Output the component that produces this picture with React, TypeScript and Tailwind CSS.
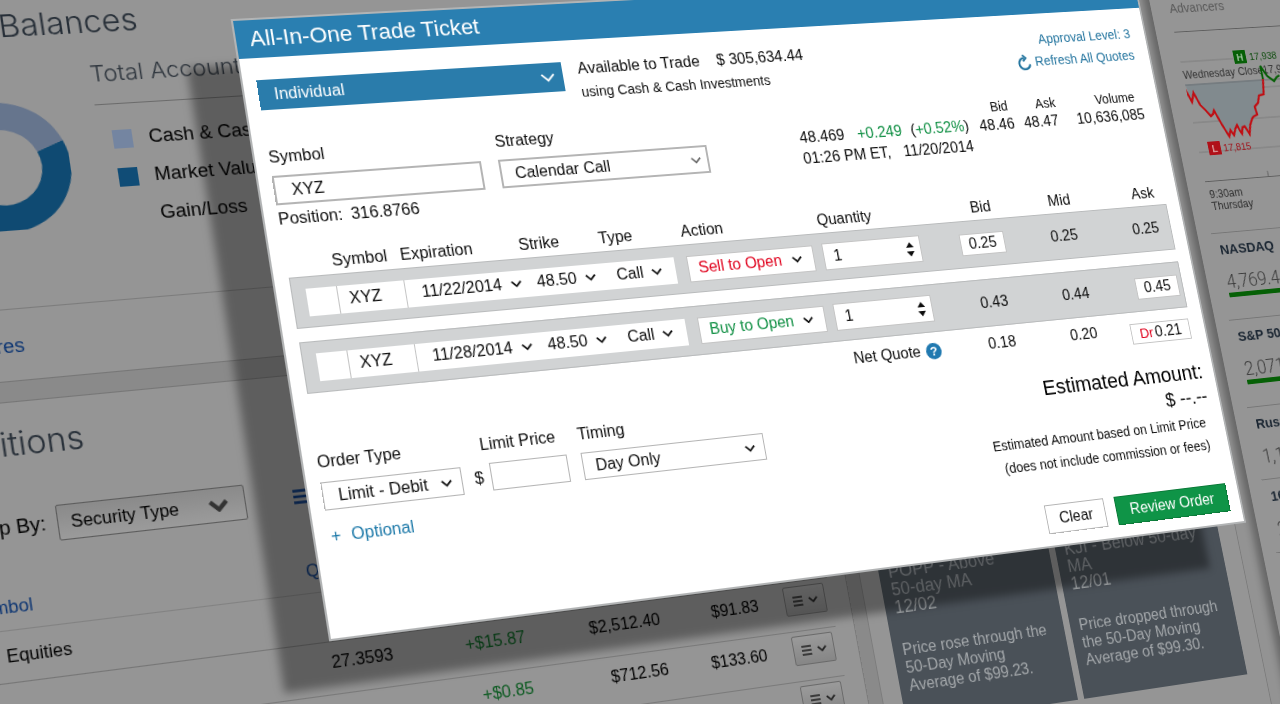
import React from 'react';

type Point = [number, number];

/** CSS matrix3d that maps a w × h rectangle onto four screen corners (TL, TR, BR, BL). */
function quadTransform(w: number, h: number, corners: Point[]): string {
  const [[x0, y0], [x1, y1], [x2, y2], [x3, y3]] = corners;
  const dx1 = x1 - x2;
  const dx2 = x3 - x2;
  const sx = x0 - x1 + x2 - x3;
  const dy1 = y1 - y2;
  const dy2 = y3 - y2;
  const sy = y0 - y1 + y2 - y3;
  const den = dx1 * dy2 - dx2 * dy1;
  const g = (sx * dy2 - dx2 * sy) / den;
  const k = (dx1 * sy - sx * dy1) / den;
  const m = [
    (x1 - x0 + g * x1) / w, (y1 - y0 + g * y1) / w, 0, g / w,
    (x3 - x0 + k * x3) / h, (y3 - y0 + k * y3) / h, 0, k / h,
    0, 0, 1, 0,
    x0, y0, 0, 1,
  ];
  return `matrix3d(${m.join(',')})`;
}

const DIALOG_CORNERS: Point[] = [[233, 21], [1132, -26], [1244, 521], [331, 639]];

function Chevron({ className, width = 2 }: { className: string; width?: number }) {
  return (
    <svg viewBox="0 0 12 8" fill="none" stroke="currentColor" strokeWidth={width} className={className} aria-hidden="true">
      <path d="M1 1.5 6 6.5 11 1.5" />
    </svg>
  );
}

function Select({ label, id, value, className, chevron, stroke = 2 }: {
  label?: string; id?: string; value: string; className: string; chevron: string; stroke?: number;
}) {
  return (
    <span className="relative flex items-center">
      <select id={id} aria-label={label} defaultValue={value} className={`w-full appearance-none py-0 outline-none ${className}`}>
        <option>{value}</option>
      </select>
      <Chevron width={stroke} className={`pointer-events-none absolute ${chevron}`} />
    </span>
  );
}

/* ---------- page behind the dialog ---------- */

function Donut() {
  return (
    <svg viewBox="-62 -62 124 124" className="mt-[54px] ml-[26px] size-[124px] shrink-0" fill="none" strokeWidth="26" aria-hidden="true">
      <path d="M46.3 -16A49 49 0 1 1 -46 16.8" stroke="#0f4a72" />
      <path d="M46.3 -16A49 49 0 0 0 -46 16.8" stroke="#66758d" />
    </svg>
  );
}

function LegendRow({ swatch, text }: { swatch: string; text: string }) {
  return (
    <li className="flex h-[37px] items-center gap-[15px] pl-3 text-[18px] text-black">
      <span className={`size-[18px] shrink-0 ${swatch}`} />
      {text}
    </li>
  );
}

function Balances() {
  return (
    <section className="border-b border-[#767676] bg-[#959595] pt-[35px]">
      <h2 className="pl-26 font-['Inter',sans-serif] text-[30px] leading-9 font-light text-[#272f38]">Balances</h2>
      <div className="flex gap-[30px]">
        <Donut />
        <div className="mt-[19px] flex-1">
          <h3 className="border-b border-[#6b6b6b] pb-4 font-['Inter',sans-serif] text-[22px] leading-7 font-light text-[#30373f]">Total Account</h3>
          <ul className="mt-[15px]">
            <LegendRow swatch="bg-[#7485a1]" text="Cash & Cash" />
            <LegendRow swatch="bg-[#104c76]" text="Market Value" />
            <LegendRow swatch="" text="Gain/Loss" />
          </ul>
        </div>
      </div>
      <div className="mt-[61px] border-t border-[#7c7c7c] pt-5 pb-[18px] pl-[61px]">
        <a href="#more" className="text-[18px] leading-7 text-[#0b3472]">res</a>
      </div>
    </section>
  );
}

function RowMenu({ label }: { label: string }) {
  return (
    <button aria-label={label} className="ml-[27px] flex h-[29px] w-[43px] items-center justify-center gap-1.5 rounded-[2px] border border-[#6a6a6a] bg-gradient-to-b from-[#9a9a9a] to-[#868686] text-[#1f1f1f]">
      <svg viewBox="0 0 10 12" className="h-3 w-2.5" stroke="currentColor" strokeWidth="1.6" aria-hidden="true">
        <path d="M0 2h10M0 6h10M0 10h10" />
      </svg>
      <Chevron className="h-2 w-2.5" />
    </button>
  );
}

const HOLDINGS = [
  { qty: '27.3593', change: '+$15.87', value: '$2,512.40', price: '$91.83' },
  { qty: '', change: '+$0.85', value: '$712.56', price: '$133.60' },
  { qty: '', change: '', value: '', price: '' },
];

function Positions() {
  return (
    <section className="mt-[18px] h-[520px] border-t border-[#767676] bg-[#959595] pt-5">
      <h2 className="pl-[52px] font-['Inter',sans-serif] text-[30px] leading-9 font-light text-[#272f38]">itions</h2>
      <div className="mt-[42px] flex items-center pl-[41px]">
        <label htmlFor="group" className="mr-2.5 text-[18px] text-black">p By:</label>
        <div className="w-[170px]">
          <Select id="group" value="Security Type" stroke={2.6} chevron="right-3.5 h-3 w-[22px] text-[#333]"
            className="h-[33px] rounded-[2px] border border-[#5c5c5c] bg-gradient-to-b from-[#8a8a8a] to-[#9b9b9b] pl-[11px] text-black" />
        </div>
        <svg viewBox="0 0 18 14" className="ml-[44px] h-3.5 w-[18px]" stroke="#0b3472" strokeWidth="2.6" aria-hidden="true">
          <path d="M0 1.5h18M0 7h18M0 12.5h18" />
        </svg>
      </div>
      <table className="w-[812px] table-fixed border-collapse text-right text-black">
        <colgroup>
          <col className="w-[287px]" /><col className="w-[88px]" /><col className="w-[127px]" />
          <col className="w-[134px]" /><col className="w-[101px]" /><col className="w-[75px]" />
        </colgroup>
        <thead>
          <tr className="h-[75px] border-b border-[#828282] align-bottom text-[#0b3472]">
            <th className="pb-2 pl-[26px] text-left font-normal">mbol</th>
            <th className="pb-2 pl-5 text-left font-normal">Qty</th>
            <th colSpan={4} />
          </tr>
        </thead>
        <tbody>
          <tr className="h-[47px] border-b border-[#767676]">
            <td className="pl-8 text-left">Equities</td>
            <td colSpan={5} />
          </tr>
          {HOLDINGS.map((h, i) => (
            <tr key={i} className="h-[49px] border-b border-[#7a7a7a] *:pb-2.5">
              <td />
              <td>{h.qty}</td>
              <td className="text-[#0b5a20]">{h.change}</td>
              <td>{h.value}</td>
              <td>{h.price}</td>
              <td><RowMenu label="Row menu" /></td>
            </tr>
          ))}
        </tbody>
      </table>
    </section>
  );
}

function AlertCard({ title, date, body }: { title: string; date: string; body: string }) {
  return (
    <article className="flex-1 bg-[#4a5158] px-2.5 pt-[18px] pb-[29px]">
      <h3 className="text-[18px] leading-[18px] text-[#92979b]">{title} <span className="whitespace-nowrap">50-day</span> MA</h3>
      <p className="text-[18px] leading-[18px] text-[#a3a7aa]">{date}</p>
      <p className="mt-[25px] leading-[18px] text-[#a3a7aa]">{body}</p>
    </article>
  );
}

function AlertsColumn() {
  return (
    <section className="border-x border-[#7c7c7c] bg-[#959595] px-5 pt-[638px]">
      <div className="flex gap-[7px]">
        <AlertCard title="POPP - Above" date="12/02" body="Price rose through the 50-Day Moving Average of $99.23." />
        <AlertCard title="KJI - Below" date="12/01" body="Price dropped through the 50-Day Moving Average of $99.30." />
      </div>
    </section>
  );
}

function IndexChart() {
  return (
    <svg viewBox="0 0 184 167" className="ml-1.5 h-[167px] w-[184px]" fill="none" fontFamily="'Liberation Sans', Arial, sans-serif" role="img" aria-label="Index chart">
      <path d="M0 33H66M0 67H184M0 101H184M0 134H184" stroke="#7d7d7d" />
      <path d="M0 58 4 78 8 68 13 82 23 95 28 89 34 105 40 119 45 113 52 108 56 117 61 109 65 118 72 101 79 97 79 88 86 76 92 75 95 58Z" fill="#818a8e" />
      <path d="M0 59H184" stroke="#6b6f72" />
      <text x="0" y="52" fontSize="12" fill="#333">Wednesday Close</text>
      <text x="97" y="52" fontSize="12" fill="#333">17,9</text>
      <rect x="65" y="24" width="15" height="15" fill="#075f07" />
      <text x="72.5" y="36" fontSize="11" fontWeight="700" textAnchor="middle" fill="#9fc29f">H</text>
      <text x="84" y="36" fontSize="11" fill="#0a4a0a">17,938</text>
      <rect x="12" y="123" width="15" height="15" fill="#b01018" />
      <text x="19.5" y="135" fontSize="11" fontWeight="700" textAnchor="middle" fill="#dca0a0">L</text>
      <text x="30" y="135" fontSize="11" fill="#a01018">17,815</text>
      <path d="M-2 61 4 78 8 68 13 82 18 88 23 95 26 93 28 89 34 105 40 119 43 112 46 118 49 111 52 107 54 113 56 117 58 110 61 109 65 118 68 108 72 101 74 99 79 97 78 88 83 84 86 76 92 75 95 58" stroke="#c00d12" strokeWidth="2.4" />
      <path d="M95 58 95 43 101 55 108 61 112 57 116 55" stroke="#075f07" strokeWidth="2.4" />
      <path d="M0 166.5H184M77 160V167" stroke="#5e5e5e" />
    </svg>
  );
}

function IndexRow({ name, value, bar }: { name: string; value: string; bar?: boolean }) {
  return (
    <div className="border-t border-[#767676] pt-2 pb-3 pl-[7px]">
      <div className="text-[15px] leading-5 font-bold text-[#1b2632]">{name}</div>
      <div className="mt-[13px] font-['Roboto',sans-serif] text-[20px] leading-6 font-light text-[#3c3c3c]">{value}</div>
      {bar && <div className="mb-3 h-[5px] bg-[#066006]" />}
    </div>
  );
}

function MarketSidebar() {
  return (
    <aside className="relative flex-1 bg-[#959595] pt-[91px] pl-4 shadow-[-5px_0_8px_2px_rgba(0,0,0,0.3)]">
      <div className="ml-1.5 border-b border-[#5e5e5e] pb-4 text-[14px] leading-5 text-[#585858]">Advancers</div>
      <IndexChart />
      <div className="pt-2 pb-[22px] pl-2 text-[12px] leading-[13px] text-[#2e2e2e]">
        <div>9:30am</div>
        <div>Thursday</div>
      </div>
      <IndexRow name="NASDAQ" value="4,769.44" bar />
      <IndexRow name="S&P 500" value="2,071" bar />
      <IndexRow name="Russ" value="1,17" />
      <IndexRow name="10" value="2" />
      <div className="border-t border-[#767676]" />
    </aside>
  );
}

/* ---------- trade ticket dialog ---------- */

function AccountBar() {
  return (
    <div className="flex pt-4">
      <div className="mt-1.5 w-[301px]">
        <Select label="Account" value="Individual" stroke={1.6} chevron="right-2 h-2.5 w-[15px] text-white" className="h-[30px] bg-[#2a7cab] pl-[15px] text-white" />
      </div>
      <div className="mt-0.5 ml-4 leading-6">
        <p className="flex gap-[18px]"><span>Available to Trade</span><span>$ 305,634.44</span></p>
        <p className="text-[14px]">using Cash &amp; Cash Investments</p>
      </div>
      <div className="ml-auto flex flex-col items-end pr-1 text-[14px] leading-6 text-[#24759f]">
        <span>Approval Level: 3</span>
        <button className="flex items-center gap-1">
          <svg viewBox="0 0 16 16" className="size-[17px]" fill="none" stroke="currentColor" strokeWidth="2.2" aria-hidden="true">
            <path d="M8.6 3.4A5.8 5.8 0 1 0 14.2 10.2" />
            <path d="M7.2 .2 10.6 3.5 7.2 6.8" strokeWidth="1.8" />
          </svg>
          Refresh All Quotes
        </button>
      </div>
    </div>
  );
}

function QuoteColumn({ label, value, pad = '' }: { label: string; value: string; pad?: string }) {
  return (
    <div className="text-right leading-5">
      <dt className={`text-[14px] leading-5 ${pad}`}>{label}</dt>
      <dd>{value}</dd>
    </div>
  );
}

function SymbolBar() {
  return (
    <div className="mt-[22px] flex">
      <div className="mt-px w-[204px]">
        <label htmlFor="symbol" className="block leading-5">Symbol</label>
        <input id="symbol" defaultValue="XYZ" className="mt-2 block h-[29px] w-full border-2 border-[#b4b4b4] pl-[15px] outline-none" />
        <p className="mt-1 flex gap-2 leading-5"><span>Position:</span><span>316.8766</span></p>
      </div>
      <div className="mt-px ml-[17px] w-[215px]">
        <label htmlFor="strategy" className="mb-2 block leading-5">Strategy</label>
        <Select id="strategy" value="Calendar Call" stroke={1.8} chevron="right-2 h-2 w-[11px] text-[#666]" className="h-[29px] border-2 border-[#b4b4b4] bg-white pl-[13px]" />
      </div>
      <div className="mt-[18px] ml-[100px] leading-[22px]">
        <p className="flex">
          <span>48.469</span>
          <span className="ml-3.5 text-[#0f8f43]">+0.249</span>
          <span className="ml-2.5">(<span className="text-[#0f8f43]">+0.52%</span>)</span>
        </p>
        <p className="flex gap-3.5"><span>01:26 PM ET,</span><span>11/20/2014</span></p>
      </div>
      <dl className="ml-auto flex pr-1.5">
        <QuoteColumn label="Bid" value="48.46" pad="pr-1" />
        <div className="w-[11px]" />
        <QuoteColumn label="Ask" value="48.47" />
        <div className="w-[21px]" />
        <QuoteColumn label="Volume" value="10,636,085" pad="pr-2" />
      </dl>
    </div>
  );
}

function Price({ value, boxed }: { value: string; boxed?: boolean }) {
  return (
    <span className={`inline-flex h-[23px] w-[50px] items-center justify-center ${boxed ? 'border border-[#c4c4c4] bg-white' : ''}`}>{value}</span>
  );
}

interface Leg { symbol: string; expiration: string; action: string; tone: string; bid: string; mid: string; ask: string; boxed: 'bid' | 'ask' }

const LEGS: Leg[] = [
  { symbol: 'XYZ', expiration: '11/22/2014', action: 'Sell to Open', tone: 'text-[#e0001c]', bid: '0.25', mid: '0.25', ask: '0.25', boxed: 'bid' },
  { symbol: 'XYZ', expiration: '11/28/2014', action: 'Buy to Open', tone: 'text-[#0f8f43]', bid: '0.43', mid: '0.44', ask: '0.45', boxed: 'ask' },
];

function LegRow({ leg, n }: { leg: Leg; n: number }) {
  return (
    <tr className="h-[50px] bg-[#d1d3d4] *:border-y *:border-[#b9bbbc]">
      <td className="border-l pl-[13px]">
        <label className="block h-[27px] bg-white">
          <input type="checkbox" aria-label={`Select leg ${n}`} className="block size-full appearance-none" />
        </label>
      </td>
      <td>
        <input aria-label={`Leg ${n} symbol`} defaultValue={leg.symbol} className="block h-[27px] w-full border-x border-[#c4c4c4] bg-white pl-2.5 outline-none" />
      </td>
      <td><Select label={`Leg ${n} expiration`} value={leg.expiration} chevron="right-[3px] h-2 w-[11px]" className="h-[27px] bg-white pl-[15px]" /></td>
      <td><Select label={`Leg ${n} strike`} value="48.50" chevron="right-[9px] h-2 w-[11px]" className="h-[27px] bg-white pl-3" /></td>
      <td><Select label={`Leg ${n} type`} value="Call" chevron="right-[14px] h-2 w-[11px]" className="h-[27px] bg-white pl-3" /></td>
      <td className="pl-[13px]"><Select label={`Leg ${n} action`} value={leg.action} chevron="right-[13px] h-2 w-[11px]" className={`h-[27px] border border-[#c4c4c4] bg-white pl-2.5 ${leg.tone}`} /></td>
      <td className="pr-6 pl-2.5">
        <span className="relative flex items-center">
          <input type="number" aria-label={`Leg ${n} quantity`} defaultValue={1} className="block h-[28px] w-full border border-[#c4c4c4] bg-white pl-2.5 outline-none [appearance:textfield] [&::-webkit-inner-spin-button]:appearance-none" />
          <svg viewBox="0 0 10 18" className="pointer-events-none absolute right-[7px] h-[18px] w-2.5" fill="currentColor" aria-hidden="true">
            <path d="M5 1.5 9.2 7H.8ZM5 16.5 .8 11h8.4Z" />
          </svg>
        </span>
      </td>
      <td className="text-center"><Price value={leg.bid} boxed={leg.boxed === 'bid'} /></td>
      <td className="text-center"><Price value={leg.mid} /></td>
      <td className="border-r pr-1 text-right"><Price value={leg.ask} boxed={leg.boxed === 'ask'} /></td>
    </tr>
  );
}

function LegsTable() {
  return (
    <table className="mx-px mt-6 w-[931px] table-fixed border-separate border-spacing-0 text-left">
      <colgroup>
        <col className="w-[43px]" /><col className="w-[66px]" /><col className="w-[117px]" /><col className="w-[81px]" /><col className="w-[73px]" />
        <col className="w-[147px]" /><col className="w-[141px]" /><col className="w-[90px]" /><col className="w-[96px]" /><col className="w-[77px]" />
      </colgroup>
      <thead>
        <tr className="leading-5 *:pb-[3px] *:font-normal">
          <td />
          <th>Symbol</th>
          <th>Expiration</th>
          <th>Strike</th>
          <th>Type</th>
          <th className="pl-3">Action</th>
          <th className="pl-2.5">Quantity</th>
          <th className="pl-2.5 text-center">Bid</th>
          <th className="pl-1 text-center">Mid</th>
          <th className="pr-3 text-right">Ask</th>
        </tr>
      </thead>
      <tbody>
        <LegRow leg={LEGS[0]} n={1} />
        <tr className="h-[13px]"><td colSpan={10} /></tr>
        <LegRow leg={LEGS[1]} n={2} />
      </tbody>
      <tfoot>
        <tr className="align-top leading-5">
          <td colSpan={7} className="pt-[9px] pr-[23px]">
            <span className="flex items-center justify-end gap-1.5">
              Net Quote
              <button aria-label="About net quote" className="flex size-[17px] items-center justify-center rounded-full bg-[#2079b0] text-[13px] leading-none font-bold text-white">?</button>
            </span>
          </td>
          <td className="pt-2 text-center">0.18</td>
          <td className="pt-2 text-center">0.20</td>
          <td className="pt-3 pr-0.5">
            <span className="ml-auto flex h-[22px] w-[69px] items-center justify-center gap-0.5 border border-[#c4c4c4] bg-white">
              <span className="text-[15px] text-[#e0001c]">Dr</span>0.21
            </span>
          </td>
        </tr>
      </tfoot>
    </table>
  );
}

function OrderForm() {
  return (
    <div>
      <div className="flex leading-5">
        <div className="w-[134px]">
          <label htmlFor="order-type" className="mb-[9px] block">Order Type</label>
          <Select id="order-type" value="Limit - Debit" chevron="right-2.5 h-2 w-[11px]" className="h-[27px] border border-[#b4b4b4] bg-white pl-[14px]" />
        </div>
        <div className="ml-3">
          <label htmlFor="limit-price" className="mb-2 block pl-2.5">Limit Price</label>
          <div className="flex items-center gap-[7px]">
            $
            <input id="limit-price" className="block h-[27px] w-[77px] border border-[#b4b4b4] outline-none" />
          </div>
        </div>
        <div className="ml-3.5 w-[187px]">
          <label htmlFor="timing" className="mb-2 block">Timing</label>
          <Select id="timing" value="Day Only" chevron="right-2.5 h-2 w-[11px]" className="h-[27px] border border-[#b4b4b4] bg-white pl-3" />
        </div>
      </div>
      <button className="mt-[15px] flex gap-2.5 pl-0.5 leading-5 text-[#1b78a8]"><span>+</span><span>Optional</span></button>
    </div>
  );
}

function TradeTicket() {
  return (
    <div role="dialog" aria-labelledby="ticket-title" className="absolute top-15 left-80 w-[960px] bg-white pb-3 text-[#0d0d0d] ring-2 ring-[#b2b4b5] shadow-[-50px_44px_8px_0_rgba(0,0,0,0.37)]">
      <h1 id="ticket-title" className="flex h-[38px] items-center bg-[#2a7fb1] pb-0.5 pl-[13px] text-[22px] text-white">All-In-One Trade Ticket</h1>
      <div className="px-[13px]">
        <AccountBar />
        <SymbolBar />
        <LegsTable />
        <div className="mt-[22px] flex justify-between">
          <OrderForm />
          <div className="text-right">
            <p className="text-[22px] leading-7 text-black">Estimated Amount:</p>
            <p className="text-[20px] leading-6">$ --.--</p>
            <p className="mt-1 pr-2 text-[14px] leading-6">Estimated Amount based on Limit Price</p>
            <p className="pr-2 text-[14px] leading-6">(does not include commission or fees)</p>
          </div>
        </div>
        <div className="mt-[30px] flex justify-end gap-3">
          <button className="h-[30px] w-[67px] border border-[#b4b4b4] bg-white">Clear</button>
          <button className="h-[30px] w-[130px] border border-[#0c7a39] bg-[#0f9447] text-white">Review Order</button>
        </div>
      </div>
    </div>
  );
}

export default function App() {
  const transform = `${quadTransform(960, 600, DIALOG_CORNERS)} translate(-320px, -60px)`;
  return (
    <main className="relative h-screen overflow-hidden bg-[#8a8a8a] font-['Liberation_Sans',Arial,sans-serif] text-[16px]">
      <div className="absolute top-0 left-0 w-[1500px] origin-top-left" style={{ transform }}>
        <div className="flex">
          <div className="w-[832px] border-r border-[#7c7c7c]">
            <Balances />
            <Positions />
          </div>
          <div className="ml-3.5 flex w-[423px] flex-col *:flex-1">
            <AlertsColumn />
          </div>
          <div className="w-[25px] bg-[#939393]" />
          <MarketSidebar />
        </div>
        <TradeTicket />
      </div>
    </main>
  );
}
